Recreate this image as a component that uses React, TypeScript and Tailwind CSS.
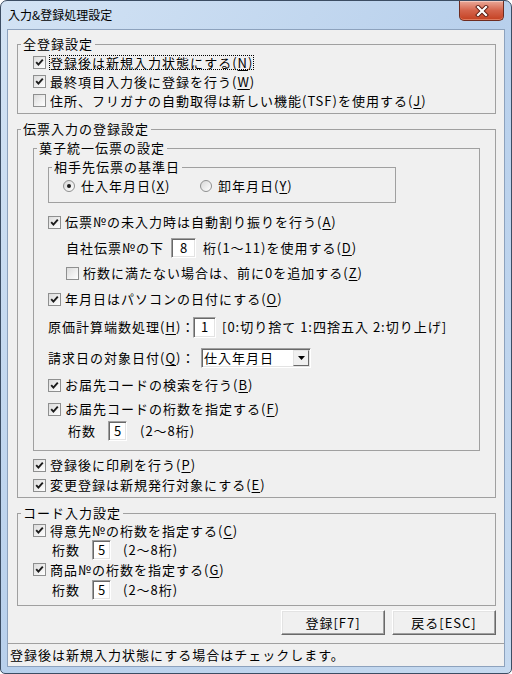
import React from "react";
import clsx from "clsx";

// 入力&登録処理設定ダイアログ（Windows 7 風）

const Mn = ({ k }: { k: string }) => (
  <>
    (<span className="underline decoration-1 underline-offset-[2px]">{k}</span>)
  </>
);

const CheckBox = ({ checked = true }: { checked?: boolean }) => (
  <span className="flex h-[13px] w-[13px] shrink-0 items-center justify-center border border-[#8e8f8f] bg-gradient-to-br from-[#dcdcdc] to-white">
    {checked && (
      <svg width="9" height="9" viewBox="0 0 9 9">
        <path d="M1.2 4.2 L3.4 6.6 L7.8 1.6" fill="none" stroke="#1c1c1c" strokeWidth="1.9" />
      </svg>
    )}
  </span>
);

const Radio = ({ checked = false }: { checked?: boolean }) => (
  <span className="flex h-[12px] w-[12px] shrink-0 items-center justify-center rounded-full border border-[#8e8f8f] bg-gradient-to-br from-[#d8d8d8] to-white">
    {checked && <span className="h-[4px] w-[4px] rounded-full bg-[#1c1c1c]" />}
  </span>
);

interface CheckRowProps {
  children: React.ReactNode;
  checked?: boolean;
  focus?: boolean;
  className?: string;
}

const CheckRow = ({ children, checked = true, focus = false, className = "h-[20px]" }: CheckRowProps) => (
  <div className={clsx("flex items-center whitespace-nowrap", className)}>
    <CheckBox checked={checked} />
    <span className={clsx(focus ? "ml-[3px] border border-dotted border-black leading-[13px]" : "ml-[4px]")}>
      {children}
    </span>
  </div>
);

// クラシックな凹み枠の入力欄
const Box = ({ children, className }: { children: React.ReactNode; className: string }) => (
  <span
    className={clsx(
      "flex shrink-0 items-center justify-center border border-t-[#a0a0a0] border-l-[#a0a0a0] border-r-white border-b-white bg-white tracking-[0px] shadow-[inset_1px_1px_0_#696969,inset_-1px_-1px_0_#e3e3e3]",
      className
    )}
  >
    {children}
  </span>
);

const Btn = ({ children }: { children: React.ReactNode }) => (
  <div className="flex h-[25px] w-[104px] items-center justify-center border border-t-white border-l-white border-r-[#696969] border-b-[#696969] bg-[#f0f0f0] shadow-[inset_-1px_-1px_0_#a0a0a0,inset_1px_1px_0_#e3e3e3]">
    {children}
  </div>
);

const Select = () => (
  <div className="flex h-[20px] w-[110px] items-center border border-t-[#a0a0a0] border-l-[#a0a0a0] border-r-white border-b-white bg-white shadow-[inset_1px_1px_0_#696969,inset_-1px_-1px_0_#e3e3e3]">
    <span className="flex-1 pl-[2px]">仕入年月日</span>
    <span className="mr-[1px] flex h-[16px] w-[16px] items-center justify-center border border-t-[#e3e3e3] border-l-[#e3e3e3] border-r-[#696969] border-b-[#696969] bg-[#f0f0f0]">
      <svg width="7" height="4" viewBox="0 0 7 4">
        <path d="M0 0 H7 L3.5 4 Z" fill="#000" />
      </svg>
    </span>
  </div>
);

interface GroupProps {
  title: string;
  className?: string;
  bodyClass?: string;
  children: React.ReactNode;
}

const Group = ({ title, className, bodyClass, children }: GroupProps) => (
  <fieldset className={clsx("border border-[#a0a0a0] px-[3px]", className)}>
    <legend className="bg-[#f0f0f0] px-[2px] leading-[14px] whitespace-nowrap">{title}</legend>
    <div className={bodyClass}>{children}</div>
  </fieldset>
);

const CloseButton = () => (
  <div className="absolute right-[7px] top-0 flex h-[20px] w-[45px] items-center justify-center rounded-b-[5px] border border-t-0 border-[#6e2c20] bg-gradient-to-b from-[#e9a898] via-[#d4634b] to-[#c4401f] shadow-[inset_0_1px_0_#f3c7bc,inset_0_-1px_0_#e07a5e]">
    <svg width="14" height="12" viewBox="0 0 14 12">
      <path d="M3 2 L11 10 M11 2 L3 10" stroke="#5a1c12" strokeWidth="4" strokeLinecap="square" />
      <path d="M3 2 L11 10 M11 2 L3 10" stroke="#ffffff" strokeWidth="2.2" strokeLinecap="square" />
    </svg>
  </div>
);

export default function App() {
  return (
    <div className="relative flex h-[674px] w-[512px] flex-col rounded-t-[7px] rounded-b-[5px] border border-[#3c4d63] bg-gradient-to-br from-[#d3e3f4] via-[#b8d0ec] to-[#c6daf0] px-[6px] pb-[6px] font-['Noto_Sans_CJK_JP',sans-serif] text-black">
      <div className="flex h-[28px] items-center pl-[1px] text-[12px]">入力&amp;登録処理設定</div>
      <CloseButton />

      <div className="flex h-[638px] flex-col border border-[#8da2bd] bg-[#f0f0f0] text-[13px] leading-[20px] tracking-[1px]">
        <Group title="全登録設定" className="ml-[9px] mr-[8px] mt-[7px]" bodyClass="pl-[12px] pt-[2px] pb-[3px]">
          <CheckRow className="h-[19px]" focus>
            登録後は新規入力状態にする<Mn k="N" />
          </CheckRow>
          <CheckRow className="h-[19px]">
            最終項目入力後に登録を行う<Mn k="W" />
          </CheckRow>
          <CheckRow className="h-[19px]" checked={false}>
            住所、フリガナの自動取得は新しい機能(TSF)を使用する<Mn k="J" />
          </CheckRow>
        </Group>

        <Group title="伝票入力の登録設定" className="ml-[9px] mr-[8px] mt-[8px]" bodyClass="px-[12px] pt-[5px] pb-[2px]">
          <Group title="菓子統一伝票の設定" bodyClass="pl-[11px] pb-[9px]">
            <Group title="相手先伝票の基準日" className="mt-[5px] w-[348px]" bodyClass="pl-[11px] pt-[3px] pb-[7px]">
              <div className="flex h-[18px] items-center">
                <div className="flex w-[137px] items-center">
                  <Radio checked />
                  <span className="ml-[6px]">
                    仕入年月日<Mn k="X" />
                  </span>
                </div>
                <div className="flex items-center">
                  <Radio />
                  <span className="ml-[6px]">
                    卸年月日<Mn k="Y" />
                  </span>
                </div>
              </div>
            </Group>

            <CheckRow className="mt-[9px] h-[20px]">
              伝票№の未入力時は自動割り振りを行う<Mn k="A" />
            </CheckRow>
            <div className="ml-[18px] mt-[6px] flex h-[20px] items-center whitespace-nowrap">
              <span className="w-[105px] shrink-0">自社伝票№の下</span>
              <Box className="h-[20px] w-[25px]">8</Box>
              <span className="ml-[7px]">
                桁(1～11)を使用する<Mn k="D" />
              </span>
            </div>
            <CheckRow className="ml-[18px] mt-[5px] h-[20px]" checked={false}>
              桁数に満たない場合は、前に0を追加する<Mn k="Z" />
            </CheckRow>
            <CheckRow className="mt-[6px] h-[20px]">
              年月日はパソコンの日付にする<Mn k="O" />
            </CheckRow>
            <div className="mt-[8px] flex h-[20px] items-center whitespace-nowrap">
              <span className="w-[145px] shrink-0">
                原価計算端数処理<Mn k="H" />：
              </span>
              <Box className="h-[21px] w-[23px]">1</Box>
              <span className="ml-[6px]">[0:切り捨て 1:四捨五入 2:切り上げ]</span>
            </div>
            <div className="mt-[11px] flex h-[20px] items-center whitespace-nowrap">
              <span className="w-[153px] shrink-0">
                請求日の対象日付<Mn k="Q" />：
              </span>
              <Select />
            </div>
            <CheckRow className="mt-[7px] h-[20px]">
              お届先コードの検索を行う<Mn k="B" />
            </CheckRow>
            <CheckRow className="mt-[4px] h-[20px]">
              お届先コードの桁数を指定する<Mn k="F" />
            </CheckRow>
            <div className="ml-[20px] mt-[2px] flex h-[20px] items-center whitespace-nowrap">
              <span className="w-[40px] shrink-0">桁数</span>
              <Box className="h-[20px] w-[19px]">5</Box>
              <span className="ml-[13px]">(2～8桁)</span>
            </div>
          </Group>

          <CheckRow className="mt-[4px] h-[20px]">
            登録後に印刷を行う<Mn k="P" />
          </CheckRow>
          <CheckRow className="h-[20px]">
            変更登録は新規発行対象にする<Mn k="E" />
          </CheckRow>
        </Group>

        <Group title="コード入力設定" className="ml-[9px] mr-[8px] mt-[8px]" bodyClass="pl-[12px] pt-[1px] pb-[5px]">
          <CheckRow className="h-[19px]">
            得意先№の桁数を指定する<Mn k="C" />
          </CheckRow>
          <div className="ml-[19px] flex h-[20px] items-center whitespace-nowrap">
            <span className="w-[40px] shrink-0">桁数</span>
            <Box className="h-[20px] w-[19px]">5</Box>
            <span className="ml-[12px]">(2～8桁)</span>
          </div>
          <CheckRow className="h-[19px]">
            商品№の桁数を指定する<Mn k="G" />
          </CheckRow>
          <div className="ml-[19px] mt-[1px] flex h-[20px] items-center whitespace-nowrap">
            <span className="w-[40px] shrink-0">桁数</span>
            <Box className="h-[20px] w-[19px]">5</Box>
            <span className="ml-[12px]">(2～8桁)</span>
          </div>
        </Group>

        <div className="mt-[4px] flex justify-end gap-[7px] pr-[8px]">
          <Btn>登録[F7]</Btn>
          <Btn>戻る[ESC]</Btn>
        </div>

        <div className="mt-auto flex h-[23px] items-center border-t border-[#a0a0a0] pl-[2px] whitespace-nowrap">
          登録後は新規入力状態にする場合はチェックします。
        </div>
      </div>
    </div>
  );
}
